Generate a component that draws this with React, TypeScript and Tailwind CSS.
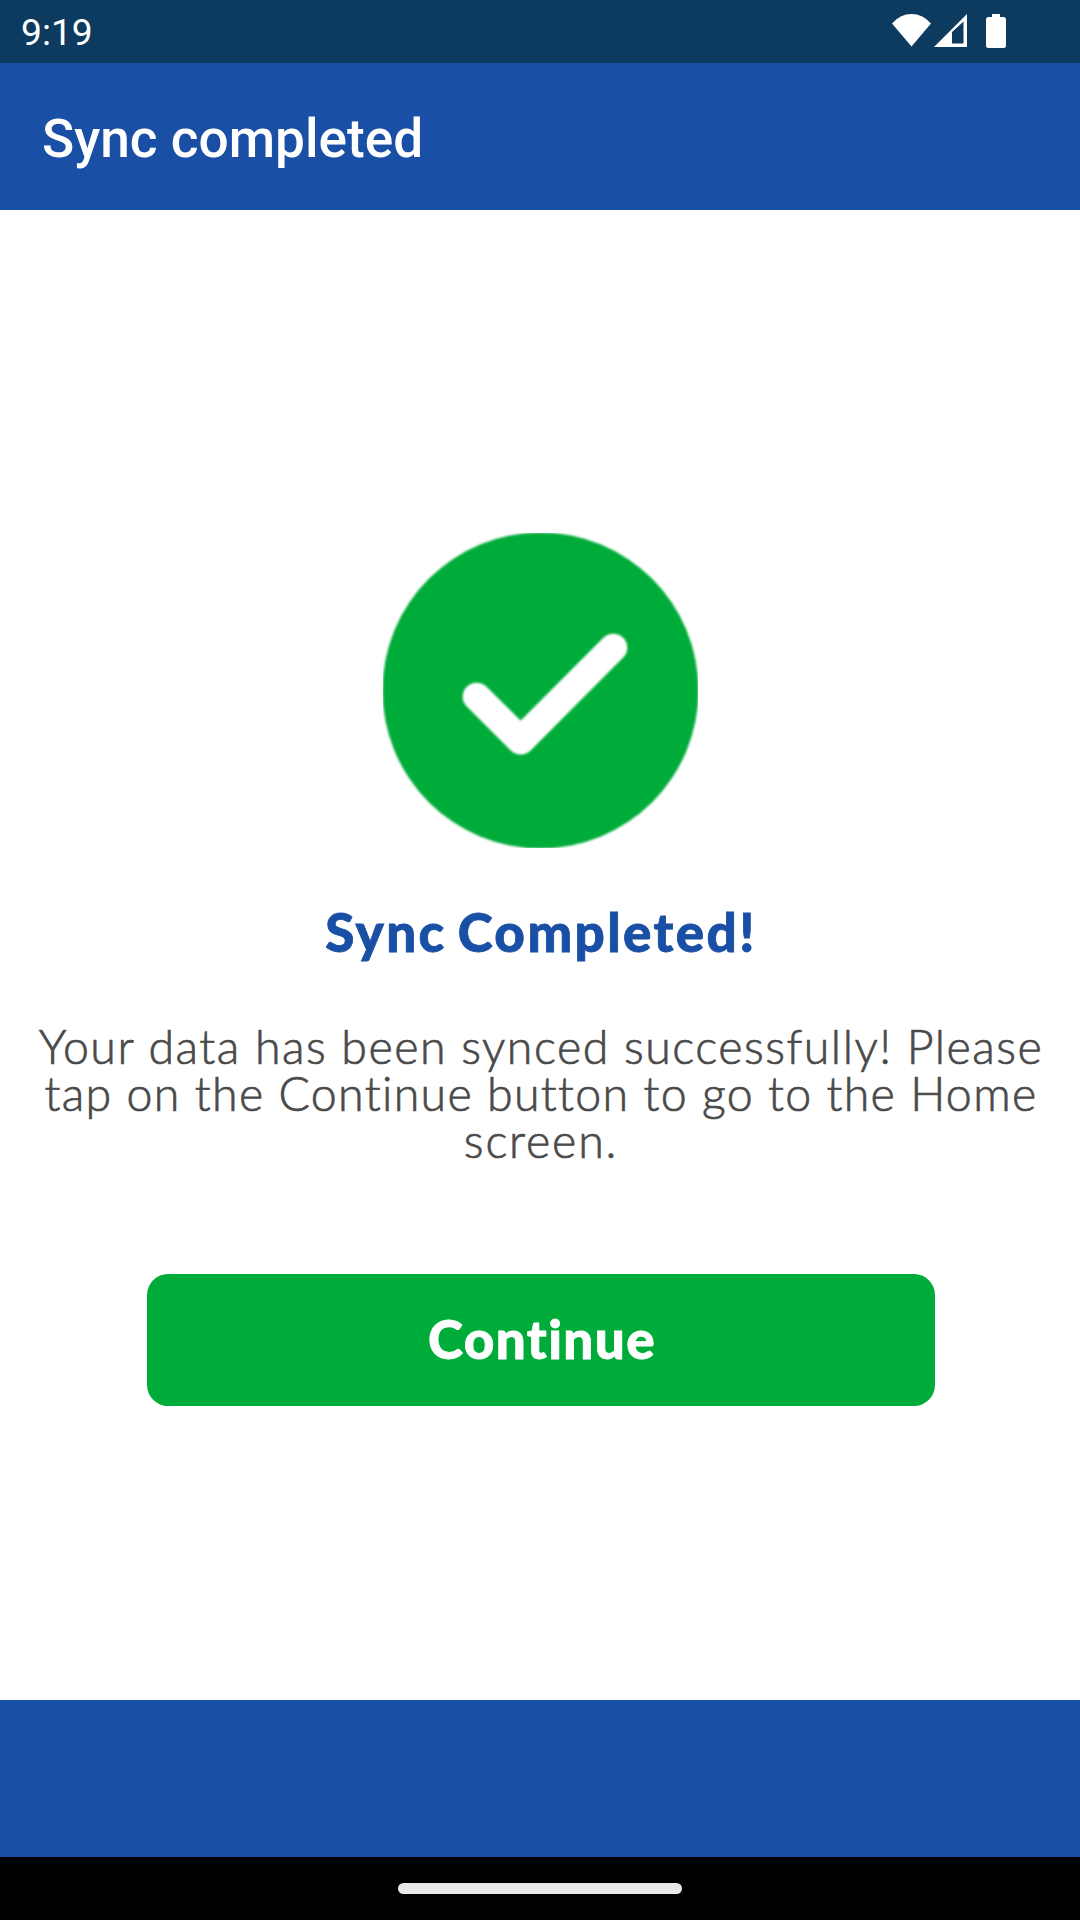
import React from 'react';

const MESSAGE_LINES = [
    { text: 'Your data has been synced successfully! Please', spacing: 'tracking-[1.5px]' },
    { text: 'tap on the Continue button to go to the Home', spacing: 'tracking-[1.34px]' },
    { text: 'screen.', spacing: 'tracking-[1.8px]' },
];

function StatusBar() {
    return (
        <div className="flex h-[63px] shrink-0 items-center justify-between bg-[#0d3a5f] pl-[21px] pr-[72px] text-white">
            <span className="text-[37.2px] leading-[63px] pt-[2px]">9:19</span>
            <svg width="118" height="63" viewBox="890 0 118 63" fill="currentColor">
                {/* Wifi */}
                <path d="M892 23.5Q900 14 911.5 14T931 23.5L911.5 46.5Z" />
                {/* Signal */}
                <path fillRule="evenodd" d="M934 47L967 14V47ZM952 32V43.5H963.5V21.5Z" />
                {/* Battery */}
                <path d="M992 14H1000V17H1003.5Q1006 17 1006 19.5V45.5Q1006 48 1003.5 48H988.5Q986 48 986 45.5V19.5Q986 17 988.5 17H992Z" />
            </svg>
        </div>
    );
}

function SuccessIcon() {
    return (
        <svg width="315" height="315" viewBox="0 0 315 315" fill="none">
            <g className="blur-[1px]">
                <circle cx="157.5" cy="157.5" r="158" fill="#00ac39" />
                <path
                    d="M93.7 163.7L137.7 207.5L230.3 114.7"
                    stroke="#fff"
                    strokeWidth="28"
                    strokeLinecap="round"
                    strokeLinejoin="round"
                />
            </g>
        </svg>
    );
}

export default function App() {
    return (
        <div className="flex h-[1920px] w-[1080px] flex-col overflow-hidden bg-white font-[Roboto,sans-serif]">
            <StatusBar />

            <header className="flex h-[147px] shrink-0 items-center bg-[#194fa4] px-[42px]">
                <h1 className="text-[53.2px] font-medium leading-[60px] text-white pt-1">Sync completed</h1>
            </header>

            <main className="flex flex-1 flex-col items-center pt-[323px] font-[Lato,sans-serif]">
                <SuccessIcon />
                <h2 className="mt-[51px] pl-[2px] text-[53px] font-black leading-[66px] tracking-[2.4px] text-[#194fa4] [-webkit-text-stroke:0.8px_#194fa4] [word-spacing:-4px]">
                    Sync Completed!
                </h2>

                <p className="mt-[58px] flex flex-col items-center whitespace-nowrap pl-[2px] text-[46.5px] font-light leading-[47px] text-[#4a4a4a] [-webkit-text-stroke:0.7px_#4a4a4a]">
                    {MESSAGE_LINES.map((line) => (
                        <span key={line.text} className={line.spacing}>{line.text}</span>
                    ))}
                </p>

                <button className="mt-[110px] ml-[2px] h-[132px] w-[788px] rounded-[21px] bg-[#00ac39] pb-[3px] pl-[2px] text-[53px] font-black tracking-[1.4px] text-white [-webkit-text-stroke:0.8px_#fff]">
                    Continue
                </button>
            </main>

            <footer className="h-[157px] shrink-0 bg-[#194fa4]" />
            <div className="flex h-[63px] shrink-0 items-center justify-center bg-black">
                <div className="h-[11px] w-[284px] rounded-full bg-[#e8e8e8]" />
            </div>
        </div>
    );
}
